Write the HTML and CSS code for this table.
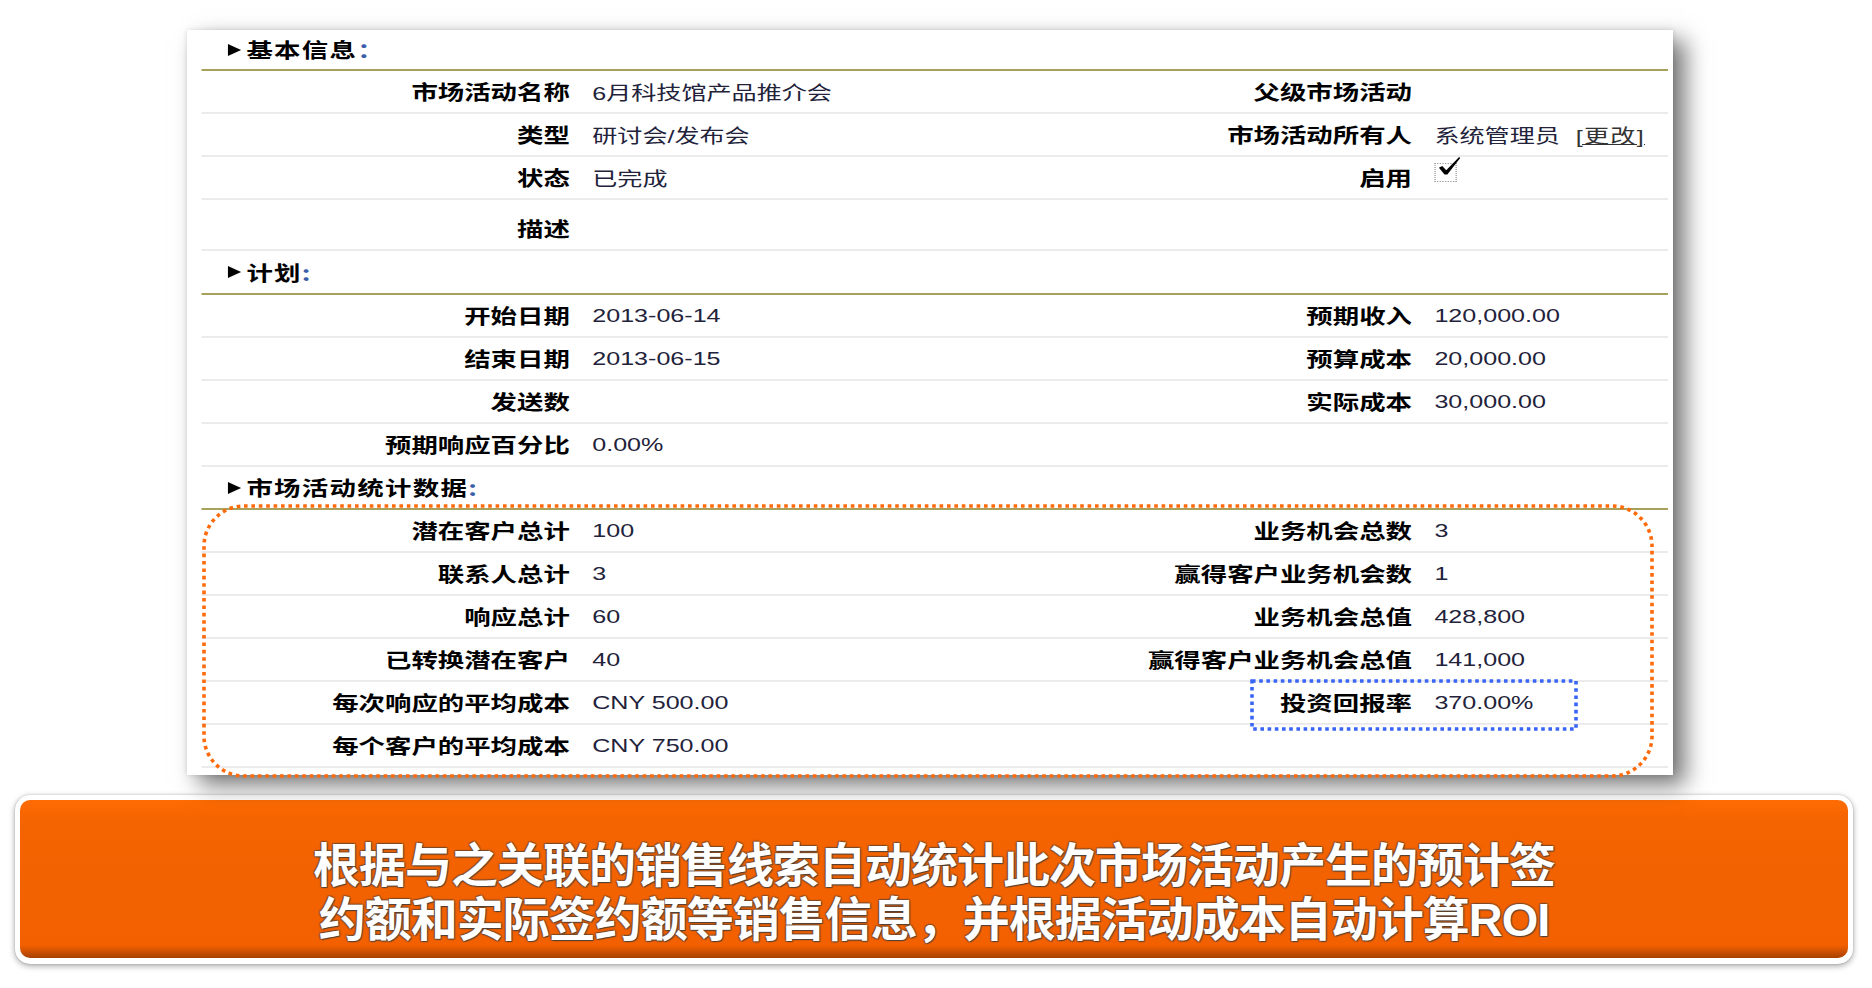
FILE: index.html
```html
<!DOCTYPE html>
<html lang="zh-CN">
<head>
<meta charset="utf-8">
<title>市场活动详情</title>
<link rel="stylesheet" href="styles.css">
</head>
<body>
<div class="page">
  <div class="card">
    <div class="sheet">
      <div class="sec-head h1"><span class="tri"></span>基本信息<span class="colon">：</span></div>
      <div class="row"><div class="lbl">市场活动名称</div><div class="val">6月科技馆产品推介会</div><div class="lbl">父级市场活动</div><div class="val"></div></div>
      <div class="row"><div class="lbl">类型</div><div class="val">研讨会/发布会</div><div class="lbl">市场活动所有人</div><div class="val">系统管理员<a class="chg">[更改]</a></div></div>
      <div class="row"><div class="lbl">状态</div><div class="val">已完成</div><div class="lbl">启用</div><div class="val val-top"><span class="chk"><svg class="tick" width="20" height="22" viewBox="0 0 20 22"><polygon points="0.5,13 3.5,11 7,16 18.5,0.5 19.5,1.5 8,21 5.5,21" fill="#000"/></svg></span></div></div>
      <div class="row row-tall"><div class="lbl">描述</div><div class="val"></div><div class="lbl"></div><div class="val"></div></div>
      <div class="sec-head h2"><span class="tri"></span>计划<span class="colon">:</span></div>
      <div class="row"><div class="lbl">开始日期</div><div class="val">2013-06-14</div><div class="lbl">预期收入</div><div class="val">120,000.00</div></div>
      <div class="row"><div class="lbl">结束日期</div><div class="val">2013-06-15</div><div class="lbl">预算成本</div><div class="val">20,000.00</div></div>
      <div class="row"><div class="lbl">发送数</div><div class="val"></div><div class="lbl">实际成本</div><div class="val">30,000.00</div></div>
      <div class="row"><div class="lbl">预期响应百分比</div><div class="val">0.00%</div><div class="lbl"></div><div class="val"></div></div>
      <div class="sec-head h3"><span class="tri"></span>市场活动统计数据<span class="colon">:</span></div>
      <div class="row"><div class="lbl">潜在客户总计</div><div class="val">100</div><div class="lbl">业务机会总数</div><div class="val">3</div></div>
      <div class="row"><div class="lbl">联系人总计</div><div class="val">3</div><div class="lbl">赢得客户业务机会数</div><div class="val">1</div></div>
      <div class="row"><div class="lbl">响应总计</div><div class="val">60</div><div class="lbl">业务机会总值</div><div class="val">428,800</div></div>
      <div class="row"><div class="lbl">已转换潜在客户</div><div class="val">40</div><div class="lbl">赢得客户业务机会总值</div><div class="val">141,000</div></div>
      <div class="row"><div class="lbl">每次响应的平均成本</div><div class="val">CNY 500.00</div><div class="lbl">投资回报率</div><div class="val">370.00%</div></div>
      <div class="row"><div class="lbl">每个客户的平均成本</div><div class="val">CNY 750.00</div><div class="lbl"></div><div class="val"></div></div>
    </div>
    <svg class="mark mark-orange" width="1452" height="274" viewBox="0 0 1452 274"><rect x="2" y="2" width="1448" height="270" rx="40" ry="40" fill="none" stroke="#ff6a0a" stroke-width="3.6" stroke-dasharray="3.6 3.8"/></svg>
    <svg class="mark mark-blue" width="328" height="52" viewBox="0 0 328 52"><rect x="2" y="2" width="324" height="48" fill="none" stroke="#3a66f5" stroke-width="3.6" stroke-dasharray="3.6 3.6"/></svg>
  </div>
  <div class="banner">
    <div class="banner-inner">
      <p class="banner-line">根据与之关联的销售线索自动统计此次市场活动产生的预计签</p>
      <p class="banner-line">约额和实际签约额等销售信息，并根据活动成本自动计算ROI</p>
    </div>
  </div>
</div>
</body>
</html>
```

FILE: styles.css
```css
* { box-sizing: border-box; }
html, body { margin: 0; padding: 0; background: #ffffff; }
body { font-family: "Noto Sans CJK SC", "Liberation Sans", sans-serif; }

.page {
  width: 1872px;
  height: 988px;
  padding: 30px 0 0 0;
  overflow: hidden;
}

.card {
  position: relative;
  width: 1486px;
  height: 745px;
  margin-left: 187px;
  background: #ffffff;
  box-shadow: 12px 10px 22px rgba(0, 0, 0, 0.55), 0 0 5px rgba(0, 0, 0, 0.12);
}

.sheet {
  width: 1126px;
  padding-left: 11px;
  transform: scaleX(1.32);
  transform-origin: 0 0;
}

.sec-head {
  width: 1111px;
  display: flex;
  align-items: center;
  padding-left: 20px;
  border-bottom: 2px solid #a7a15c;
  font-family: "Noto Sans CJK SC", sans-serif;
  font-weight: 700;
  font-size: 20px;
  letter-spacing: 1px;
  color: #000;
}
.h1 { height: 41px; }
.h2 { height: 44px; }
.h3 { height: 43px; }

.tri {
  display: inline-block;
  width: 0;
  height: 0;
  border-left: 10px solid #000;
  border-top: 6px solid transparent;
  border-bottom: 6px solid transparent;
  margin-right: 4px;
}
.colon { color: #3b5ea8; }

.row {
  width: 1111px;
  height: 43px;
  display: grid;
  grid-template-columns: 288px 401px 237px 185px;
  border-bottom: 2px solid #ebebeb;
}
.row-tall { height: 51px; }

.lbl {
  display: flex;
  align-items: center;
  justify-content: flex-end;
  padding-right: 9px;
  font-family: "Noto Sans CJK SC", sans-serif;
  font-weight: 700;
  font-size: 20px;
  color: #000;
  white-space: nowrap;
}
.row-tall .lbl { padding-top: 8px; }

.val {
  display: flex;
  align-items: center;
  padding-left: 8px;
  font-family: "Liberation Sans", "Noto Sans CJK SC", sans-serif;
  font-size: 19px;
  color: #22223a;
  white-space: nowrap;
}
.val-top { align-items: flex-start; padding-top: 6px; }

.chg {
  margin-left: 12px;
  color: #333;
  text-decoration: underline;
  letter-spacing: 1px;
}

.chk {
  position: relative;
  display: inline-block;
  width: 17px;
  height: 19px;
  border: 1px dotted #9a9a9a;
}
.tick {
  position: absolute;
  left: 2px;
  top: -8px;
  width: 17px;
  height: 20px;
}

.mark { position: absolute; }
.mark-orange { left: 15px; top: 474px; }
.mark-blue { left: 1063px; top: 649px; }

.banner {
  width: 1838px;
  height: 169px;
  margin: 20px 0 0 15px;
  padding: 5px 5px 6px 5px;
  background: #ffffff;
  border-radius: 15px;
  box-shadow: 0 2px 6px rgba(0, 0, 0, 0.35), 0 0 2px rgba(0, 0, 0, 0.2);
}
.banner-inner {
  height: 158px;
  border-radius: 10px;
  background: linear-gradient(#ff6c04 0%, #f46400 12%, #f26000 92%, #c24c00 97%, #a84000 100%);
  padding-top: 39px;
  text-align: center;
}
.banner-line {
  margin: 0;
  font-family: "Liberation Sans", "Noto Sans CJK SC", sans-serif;
  font-weight: 700;
  font-size: 47px;
  letter-spacing: -1px;
  line-height: 54px;
  color: #ffffff;
  text-shadow: 1px 1px 1px rgba(60, 60, 60, 0.85), -1px -1px 1px rgba(60, 60, 60, 0.45), 1px -1px 1px rgba(60, 60, 60, 0.4), -1px 1px 1px rgba(60, 60, 60, 0.4);
}
```
